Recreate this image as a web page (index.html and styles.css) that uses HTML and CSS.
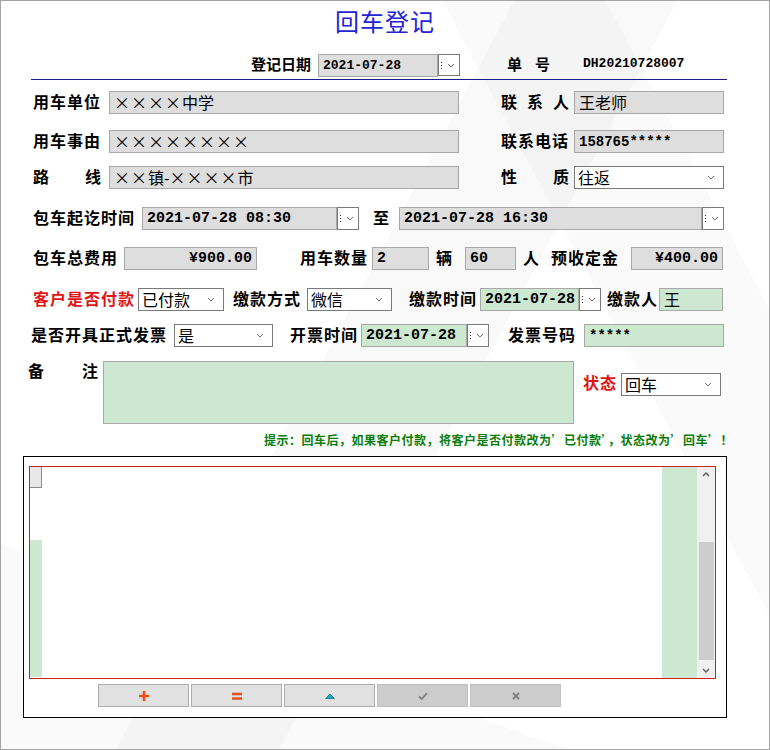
FILE: index.html
```html
<!DOCTYPE html>
<html lang="zh-CN">
<head>
    <meta charset="UTF-8">
    <title>回车登记</title>
    <link rel="stylesheet" href="styles.css">
</head>
<body>
    <div class="page">
        <h1 class="title">回车登记</h1>

        <div class="head-row">
            <span class="hlbl w62">登记日期</span>
            <div class="field gray hfield ml5 w120"><span class="num-sm">2021-07-28</span></div>
            <div class="drop w22 h22"><i class="dots"></i><svg class="chev" viewBox="0 0 8 5"><path d="M1 1 4 4 7 1"/></svg></div>
            <span class="hlbl jus ml47 w43">单 号</span>
            <span class="code ml33">DH20210728007</span>
        </div>
        <div class="rule"></div>

        <div class="row r1">
            <span class="lbl w68">用车单位</span>
            <div class="field gray ml8 w350"><span class="fw">××××</span>中学</div>
            <span class="lbl jus ml42 w68">联 系 人</span>
            <div class="field gray ml5 w150">王老师</div>
        </div>
        <div class="row r2">
            <span class="lbl w68">用车事由</span>
            <div class="field gray ml8 w350"><span class="fw">××××××××</span></div>
            <span class="lbl ml42 w68">联系电话</span>
            <div class="field gray ml5 w150"><span class="num-ph">158765*****</span></div>
        </div>
        <div class="row r3">
            <span class="lbl jus w68">路 线</span>
            <div class="field gray ml8 w350"><span class="fw">××</span>镇-<span class="fw">××××</span>市</div>
            <span class="lbl jus ml42 w68">性 质</span>
            <div class="select ml5 w150">往返<svg class="chev" viewBox="0 0 8 5"><path d="M1 1 4 4 7 1"/></svg></div>
        </div>
        <div class="row r4">
            <span class="lbl w102">包车起讫时间</span>
            <div class="field gray ml7 w195"><span class="num">2021-07-28 08:30</span></div>
            <div class="drop w22"><i class="dots"></i><svg class="chev" viewBox="0 0 8 5"><path d="M1 1 4 4 7 1"/></svg></div>
            <span class="lbl ml14 w17">至</span>
            <div class="field gray ml9 w303"><span class="num">2021-07-28 16:30</span></div>
            <div class="drop w22"><i class="dots"></i><svg class="chev" viewBox="0 0 8 5"><path d="M1 1 4 4 7 1"/></svg></div>
        </div>
        <div class="row r5">
            <span class="lbl w85">包车总费用</span>
            <div class="field gray right ml6 w133"><span class="num">¥900.00</span></div>
            <span class="lbl ml43 w68">用车数量</span>
            <div class="field gray ml4 w57"><span class="num">2</span></div>
            <span class="lbl ml7 w17">辆</span>
            <div class="field gray ml12 w51"><span class="num">60</span></div>
            <span class="lbl ml7 w17">人</span>
            <span class="lbl ml11 w68">预收定金</span>
            <div class="field gray right ml12 w92"><span class="num">¥400.00</span></div>
        </div>
        <div class="row r6">
            <span class="lbl red w102">客户是否付款</span>
            <div class="select ml3 w86">已付款<svg class="chev" viewBox="0 0 8 5"><path d="M1 1 4 4 7 1"/></svg></div>
            <span class="lbl ml9 w68">缴款方式</span>
            <div class="select ml6 w85">微信<svg class="chev" viewBox="0 0 8 5"><path d="M1 1 4 4 7 1"/></svg></div>
            <span class="lbl ml17 w68">缴款时间</span>
            <div class="field green ml3 w99"><span class="num">2021-07-28</span></div>
            <div class="drop w22"><i class="dots"></i><svg class="chev" viewBox="0 0 8 5"><path d="M1 1 4 4 7 1"/></svg></div>
            <span class="lbl ml6 w51">缴款人</span>
            <div class="field green ml1 w64">王</div>
        </div>
        <div class="row r7">
            <span class="lbl mlm2 w136">是否开具正式发票</span>
            <div class="select ml7 w99">是<svg class="chev" viewBox="0 0 8 5"><path d="M1 1 4 4 7 1"/></svg></div>
            <span class="lbl ml17 w68">开票时间</span>
            <div class="field green ml3 w106"><span class="num">2021-07-28</span></div>
            <div class="drop w22"><i class="dots"></i><svg class="chev" viewBox="0 0 8 5"><path d="M1 1 4 4 7 1"/></svg></div>
            <span class="lbl ml19 w68">发票号码</span>
            <div class="field green ml8 w140"><span class="num-ph">*****</span></div>
        </div>
        <div class="row r8">
            <span class="lbl jus mlm5 w70">备 注</span>
            <div class="memo green ml5 w471"></div>
            <span class="lbl red state ml9 w34">状态</span>
            <div class="select state ml4 w100">回车<svg class="chev" viewBox="0 0 8 5"><path d="M1 1 4 4 7 1"/></svg></div>
        </div>

        <p class="hint">提示：回车后，如果客户付款，将客户是否付款改为’已付款’，状态改为’回车’！</p>

        <div class="grid-box">
            <div class="grid">
                <div class="row-head">
                    <div class="corner"></div>
                    <div class="head-fill"></div>
                </div>
                <div class="cells"></div>
                <div class="col-green"></div>
                <div class="vscroll">
                    <svg class="sarrow" viewBox="0 0 8 5"><path d="M1 4 4 1 7 4"/></svg>
                    <div class="thumb"></div>
                    <svg class="sarrow" viewBox="0 0 8 5"><path d="M1 1 4 4 7 1"/></svg>
                </div>
            </div>
            <div class="toolbar">
                <button class="tbtn"><svg viewBox="0 0 12 12"><path class="ic-add" d="M6 1v10M1 6h10"/></svg></button>
                <button class="tbtn"><svg viewBox="0 0 12 12"><path class="ic-add" d="M1 4h10M1 8.5h10"/></svg></button>
                <button class="tbtn"><svg viewBox="0 0 12 12"><path class="ic-up" d="M1.5 8.5 6 4l4.5 4.5z"/></svg></button>
                <button class="tbtn off"><svg viewBox="0 0 12 12"><path class="ic-off" d="M2 6.5 4.8 9 10 3"/></svg></button>
                <button class="tbtn off"><svg viewBox="0 0 12 12"><path class="ic-off" d="M3 3l6 6M9 3 3 9"/></svg></button>
            </div>
        </div>
    </div>
</body>
</html>
```

FILE: styles.css
```css
body {
    margin: 0;
    font-family: "Noto Sans CJK SC", "Liberation Sans", sans-serif;
    color: #000;
}
.page {
    width: 770px;
    height: 750px;
    box-sizing: border-box;
    border: 1px solid #a3a3a3;
    overflow: hidden;
    background:
        linear-gradient(118deg, transparent 0 44%, rgba(0, 0, 0, 0.022) 44% 58%, transparent 58%),
        linear-gradient(62deg, transparent 0 72%, rgba(0, 0, 0, 0.02) 72% 86%, transparent 86%),
        linear-gradient(200deg, transparent 0 80%, rgba(0, 0, 0, 0.018) 80%),
        #fff;
}
.title {
    margin: 0;
    padding-top: 6px;
    text-align: center;
    font-size: 24px;
    line-height: 28px;
    font-weight: normal;
    color: #2424d4;
    letter-spacing: 1px;
}

/* header: date and order number */
.head-row {
    display: flex;
    align-items: center;
    height: 22px;
    margin-top: 19px;
    padding-left: 250px;
}
.hlbl {
    box-sizing: border-box;
    font-size: 15px;
    font-weight: bold;
    line-height: 19px;
    padding-bottom: 3px;
    white-space: nowrap;
}
.hfield { height: 22px; }
.code {
    font-family: "Liberation Mono", monospace;
    font-size: 13px;
    font-weight: bold;
    margin-top: -4px;
}
.rule {
    height: 1px;
    margin: 3px 42px 0 30px;
    background: #1c1c8c;
}

/* form rows */
.row {
    display: flex;
    align-items: center;
    height: 23px;
    padding-left: 32px;
}
.r1 { margin-top: 11px; }
.r2 { margin-top: 16px; }
.r3 { margin-top: 13px; }
.r4 { margin-top: 18px; }
.r5 { margin-top: 17px; }
.r6 { margin-top: 18px; }
.r7 { margin-top: 13px; }
.r8 {
    margin-top: 14px;
    height: 63px;
    align-items: flex-start;
}
.lbl {
    flex: none;
    box-sizing: border-box;
    font-size: 16px;
    font-weight: bold;
    letter-spacing: 1px;
    line-height: 20px;
    padding-bottom: 3px;
    white-space: nowrap;
}
.r8 .lbl { line-height: 18px; }
.jus { text-align-last: justify; letter-spacing: 0; }
.red { color: #e01414; }
.state { margin-top: 12px; }

.field, .select, .memo, .drop {
    flex: none;
    box-sizing: border-box;
    height: 23px;
    border: 1px solid #a8a8a8;
}
.field {
    display: flex;
    align-items: center;
    padding: 0 4px 2px;
    font-size: 16px;
    white-space: nowrap;
}
.field.right { justify-content: flex-end; }
.gray { background: #dedede; }
.green { background: #cde8d0; }
.memo { height: 63px; }
.fw { font-feature-settings: "fwid"; letter-spacing: 1px; }
.num {
    font-family: "Liberation Mono", monospace;
    font-size: 15px;
    font-weight: bold;
    margin-bottom: -2px;
}
.num-sm {
    font-family: "Liberation Mono", monospace;
    font-size: 13px;
    font-weight: bold;
    margin-bottom: -2px;
}
.num-ph {
    font-family: "Liberation Mono", monospace;
    font-size: 14px;
    font-weight: bold;
    margin-bottom: -2px;
}

.select {
    display: flex;
    align-items: center;
    justify-content: space-between;
    padding: 0 8px 2px 3px;
    background: #fff;
    border-color: #7a7a7a;
    font-size: 16px;
}
.chev {
    width: 8px;
    height: 5px;
    margin-bottom: -2px;
    fill: none;
    stroke: #6d6d6d;
    stroke-width: 1;
}
.drop {
    display: flex;
    align-items: center;
    justify-content: space-between;
    padding: 0 4px 0 2px;
    background: #fff;
    border-color: #7a7a7a;
}
.drop .chev { margin-bottom: 0; }
.drop.h22 { height: 22px; }
.dots {
    width: 1px;
    height: 7px;
    background: repeating-linear-gradient(#333 0 1px, transparent 1px 3px);
}

/* widths and offsets */
.w17 { width: 17px; }
.w22 { width: 22px; }
.w34 { width: 34px; }
.w43 { width: 43px; }
.w51 { width: 51px; }
.w57 { width: 57px; }
.w62 { width: 62px; }
.w64 { width: 64px; }
.w68 { width: 68px; }
.w70 { width: 70px; }
.w85 { width: 85px; }
.w86 { width: 86px; }
.w92 { width: 92px; }
.w99 { width: 99px; }
.w100 { width: 100px; }
.w102 { width: 102px; }
.w106 { width: 106px; }
.w120 { width: 120px; }
.w133 { width: 133px; }
.w136 { width: 136px; }
.w140 { width: 140px; }
.w150 { width: 150px; }
.w195 { width: 195px; }
.w303 { width: 303px; }
.w350 { width: 350px; }
.w471 { width: 471px; }
.mlm5 { margin-left: -5px; }
.mlm2 { margin-left: -2px; }
.ml1 { margin-left: 1px; }
.ml3 { margin-left: 3px; }
.ml4 { margin-left: 4px; }
.ml5 { margin-left: 5px; }
.ml6 { margin-left: 6px; }
.ml7 { margin-left: 7px; }
.ml8 { margin-left: 8px; }
.ml9 { margin-left: 9px; }
.ml11 { margin-left: 11px; }
.ml12 { margin-left: 12px; }
.ml14 { margin-left: 14px; }
.ml17 { margin-left: 17px; }
.ml19 { margin-left: 19px; }
.ml33 { margin-left: 33px; }
.ml42 { margin-left: 42px; }
.ml43 { margin-left: 43px; }
.ml47 { margin-left: 47px; }

.hint {
    margin: 8px 0 0;
    padding-right: 36px;
    text-align: right;
    font-size: 12px;
    line-height: 16px;
    font-weight: bold;
    letter-spacing: 0.5px;
    color: #0a7d0a;
    font-feature-settings: "fwid";
}

/* detail grid */
.grid-box {
    box-sizing: border-box;
    width: 704px;
    height: 262px;
    margin: 8px 0 0 22px;
    padding: 9px 0 0 5px;
    border: 1px solid #000;
    background: #fff;
}
.grid {
    display: flex;
    box-sizing: border-box;
    width: 687px;
    height: 213px;
    border: 1px solid #c92222;
}
.row-head {
    display: flex;
    flex-direction: column;
    width: 12px;
}
.corner {
    box-sizing: border-box;
    height: 21px;
    background: #e8e8e8;
    border-right: 1px solid #8a8a8a;
    border-bottom: 1px solid #8a8a8a;
}
.head-fill {
    flex: 1;
    margin-top: 52px;
    margin-bottom: 1px;
    background: #cde8d0;
}
.cells { flex: 1; }
.col-green {
    width: 35px;
    background: #cde8d0;
}
.vscroll {
    display: flex;
    flex-direction: column;
    align-items: center;
    width: 18px;
    background: #f0f0f0;
}
.sarrow {
    width: 8px;
    height: 5px;
    margin: 5px 0;
    fill: none;
    stroke: #606060;
    stroke-width: 1.5;
}
.thumb {
    width: 15px;
    height: 118px;
    margin-top: 60px;
    margin-bottom: auto;
    background: #cdcdcd;
}

.toolbar {
    display: flex;
    gap: 2px;
    margin: 5px 0 0 69px;
}
.tbtn {
    display: flex;
    align-items: center;
    justify-content: center;
    width: 91px;
    height: 23px;
    padding: 0;
    background: #e1e1e1;
    border: 1px solid #adadad;
}
.tbtn.off {
    background: #cccccc;
    border-color: #bfbfbf;
}
.tbtn svg {
    width: 12px;
    height: 12px;
}
.ic-add {
    fill: none;
    stroke: #e4521b;
    stroke-width: 2.6;
}
.ic-up {
    fill: #22a7b8;
    stroke: #127a8a;
    stroke-width: 0.8;
}
.ic-off {
    fill: none;
    stroke: #7e7e7e;
    stroke-width: 1.8;
}
```
